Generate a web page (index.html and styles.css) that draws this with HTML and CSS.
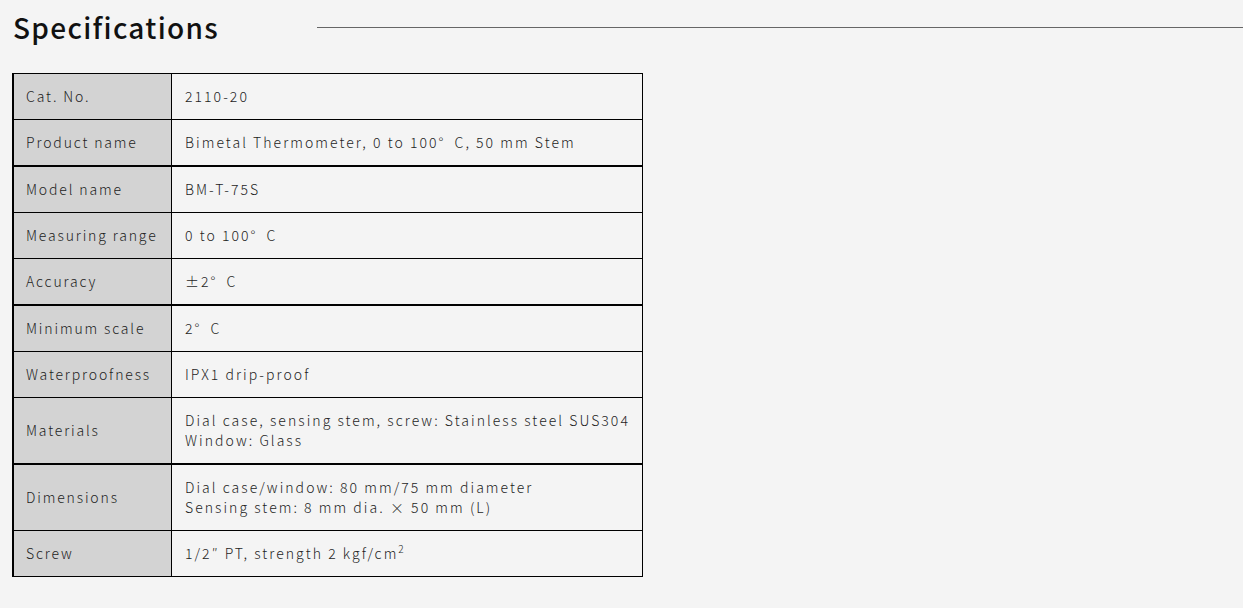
FILE: index.html
```html
<!DOCTYPE html>
<html lang="en">
<head>
<meta charset="utf-8">
<title>Specifications</title>
<link rel="stylesheet" href="styles.css">
</head>
<body>
<div class="page">
  <div class="heading">
    <h2 class="title">Specifications</h2>
    <div class="rule"></div>
  </div>
  <table class="spec">
    <tbody>
      <tr><th>Cat. No.</th><td>2110-20</td></tr>
      <tr class="sep"><th>Product name</th><td>Bimetal Thermometer, 0 to 100°&ensp;C, 50 mm Stem</td></tr>
      <tr><th>Model name</th><td>BM-T-75S</td></tr>
      <tr><th>Measuring range</th><td>0 to 100°&ensp;C</td></tr>
      <tr class="sep"><th>Accuracy</th><td>±2°&ensp;C</td></tr>
      <tr><th>Minimum scale</th><td>2°&ensp;C</td></tr>
      <tr><th>Waterproofness</th><td>IPX1 drip-proof</td></tr>
      <tr class="sep"><th>Materials</th><td>Dial case, sensing stem, screw: Stainless steel SUS304<br>Window: Glass</td></tr>
      <tr><th>Dimensions</th><td>Dial case/window: 80 mm/75 mm diameter<br>Sensing stem: 8 mm dia. × 50 mm (L)</td></tr>
      <tr><th>Screw</th><td>1/2″ PT, strength 2 kgf/cm<sup>2</sup></td></tr>
    </tbody>
  </table>
</div>
</body>
</html>
```

FILE: styles.css
```css
html, body {
  margin: 0;
  padding: 0;
  background: #f4f4f4;
}
.page {
  padding: 0 0 0 12px;
  font-family: "Noto Sans CJK JP", "Noto Sans", sans-serif;
  color: #222;
}
.heading {
  display: flex;
  align-items: center;
  height: 54px;
}
.title {
  margin: 0 0 0 1px;
  font-size: 28px;
  font-weight: 500;
  letter-spacing: 1.3px;
  line-height: 54px;
  color: #111;
  width: 304px;
  flex: none;
}
.rule {
  flex: 1;
  height: 1px;
  background: #666;
}
.spec {
  margin-top: 19px;
  border-collapse: collapse;
  width: 631px;
  border-left: 2px solid #000;
  border-top: 1px solid #000;
  border-right: 1px solid #000;
  border-bottom: 1px solid #000;
  font-size: 14px;
}
.spec th, .spec td {
  border: 1px solid #000;
  padding: 12px 12px 13px;
  line-height: 20px;
  text-align: left;
  vertical-align: middle;
  font-weight: 300;
  color: #1e1e1e;
}
.spec th {
  width: 133px;
  background: #d3d3d3;
  letter-spacing: 1.85px;
}
.spec td {
  padding-left: 13px;
  background: #f4f4f4;
  letter-spacing: 2.05px;
}
.spec tr.sep th, .spec tr.sep td {
  border-bottom-width: 2px;
}
.spec sup {
  font-size: 10px;
  line-height: 0;
}
```
